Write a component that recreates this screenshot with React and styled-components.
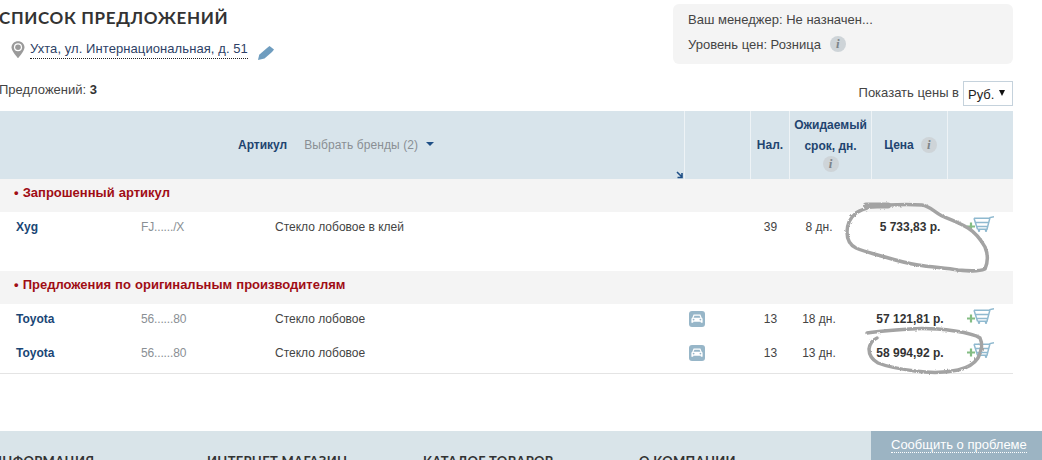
import React from 'react';
import styled, { createGlobalStyle } from 'styled-components';

const GlobalStyle = createGlobalStyle`
  html, body {
    margin: 0;
    padding: 0;
    background: #fff;
    overflow: hidden;
  }
  body {
    font-family: "Liberation Sans", Arial, sans-serif;
    font-size: 12px;
    color: #333;
  }
`;

const COLUMNS = '141px 134px 409px 66px 39px 82px 76px 66px';

const Page = styled.div`
  position: relative;
  width: 1042px;
  height: 460px;
  overflow: hidden;
`;

const Content = styled.div`
  width: 1013px;
`;

const Top = styled.div`
  display: flex;
  justify-content: space-between;
  padding-top: 4px;
  height: 81px;
  box-sizing: border-box;
`;

const Title = styled.h1`
  margin: 4px 0 0 -1px;
  font-family: Lato, sans-serif;
  font-size: 17px;
  line-height: 20px;
  font-weight: 700;
  letter-spacing: 0.65px;
  color: #333;
`;

const Address = styled.div`
  display: flex;
  align-items: flex-start;
  margin: 12px 0 0 11px;
  font-size: 13px;
`;

const AddressLink = styled.span`
  margin-left: 5px;
  padding-top: 1px;
  line-height: 16px;
  height: 17px;
  letter-spacing: 0.08px;
  color: #2e3f66;
  border-bottom: 1px dotted #222;
`;

const PencilIcon = styled.svg`
  width: 16px;
  height: 14px;
  margin: 6px 0 0 10px;
`;

const ManagerPanel = styled.div`
  width: 340px;
  height: 60px;
  box-sizing: border-box;
  padding: 7px 15px;
  background: #f4f4f4;
  border-radius: 6px;
  color: #444;
  font-size: 13px;
`;

const PanelLine = styled.div`
  display: flex;
  align-items: center;
  height: 16px;
  margin-bottom: 9px;
`;

const InfoBadge = styled.span`
  display: inline-flex;
  align-items: center;
  justify-content: center;
  width: 16px;
  height: 16px;
  margin-left: ${(p) => p.$gap ?? 9}px;
  margin-top: ${(p) => p.$raise ? -p.$raise : 0}px;
  border-radius: 50%;
  background: #ced4d8;
  color: #7d8489;
  font-family: "Liberation Serif", serif;
  font-style: italic;
  font-weight: 700;
  font-size: 13px;
  line-height: 16px;
`;

const OffersBar = styled.div`
  display: flex;
  justify-content: space-between;
  height: 30px;
  font-size: 13px;
`;

const OffersCount = styled.div`
  margin: 1px 0 0 -1px;
  line-height: 16px;
  color: #444;

  b {
    color: #333;
  }
`;

const CurrencyPicker = styled.div`
  display: flex;
  align-items: flex-start;
  color: #444;
`;

const CurrencyLabel = styled.span`
  margin: 4px 4px 0 0;
  line-height: 16px;
`;

const CurrencyBox = styled.div`
  position: relative;
  width: 50px;
  height: 25px;
  box-sizing: border-box;
  padding: 5px 0 0 4px;
  border: 1px solid #c5d2dc;
  line-height: 16px;
  color: #222;

  &::after {
    content: '';
    position: absolute;
    right: 7px;
    top: 8px;
    border-left: 3.5px solid transparent;
    border-right: 3.5px solid transparent;
    border-top: 6px solid #111;
  }
`;

const HeaderRow = styled.div`
  display: grid;
  grid-template-columns: 684px 66px 39px 82px 76px 66px;
  height: 68px;
  background: #d8e4eb;
  color: #1f4470;
  font-weight: 700;
`;

const HeaderCell = styled.div`
  position: relative;
  display: flex;
  flex-direction: ${(p) => (p.$row ? 'row' : 'column')};
  align-items: center;
  justify-content: center;
  text-align: center;
  box-sizing: border-box;
  padding-left: ${(p) => p.$shift || 0}px;
  padding-bottom: ${(p) => p.$lift || 0}px;
  border-left: ${(p) => (p.$first ? '0' : '1px solid #eef3f6')};
`;

const ArticleHead = styled.div`
  display: flex;
  align-items: center;
  align-self: flex-start;
  margin: 0 0 0 238px;
`;

const BrandPicker = styled.span`
  margin-left: 17px;
  font-weight: 400;
  letter-spacing: 0.1px;
  color: #8a8f94;
`;

const Caret = styled.span`
  display: inline-block;
  margin-left: 8px;
  margin-bottom: 2px;
  border-left: 4px solid transparent;
  border-right: 4px solid transparent;
  border-top: 4px solid #1f4f86;
`;

const ResizeMark = styled.svg`
  position: absolute;
  right: 0;
  bottom: 0;
  width: 8px;
  height: 8px;
`;

const TermLine = styled.div`
  line-height: 21px;
`;

const SectionRow = styled.div`
  height: ${(p) => p.$height}px;
  box-sizing: border-box;
  padding: 5px 0 0 14px;
  background: #f4f4f4;
  color: #a00d14;
  font-weight: 700;
  font-size: 13px;
  line-height: 18px;
  word-spacing: 0.5px;
`;

const OfferRow = styled.div`
  display: grid;
  grid-template-columns: ${COLUMNS};
  height: ${(p) => p.$height}px;
  box-sizing: border-box;
  padding-top: ${(p) => p.$top}px;
  line-height: 16px;
  color: #444;
  border-bottom: ${(p) => (p.$last ? '1px solid #e4e4e4' : '0')};
`;

const Brand = styled.div`
  padding-left: 16px;
  font-weight: 700;
  color: #1a4675;
`;

const Article = styled.div`
  letter-spacing: -0.15px;
  color: #8a8f94;
`;

const Centered = styled.div`
  display: flex;
  justify-content: center;
  padding-left: ${(p) => p.$left || 0}px;
  padding-right: ${(p) => p.$right || 0}px;
`;

const Price = styled(Centered)`
  font-weight: 700;
  color: #333;
  white-space: nowrap;
`;

const CarCell = styled.div`
  padding-left: 5px;
`;

const CarBadge = styled.svg`
  display: block;
  width: 16px;
  height: 16px;
`;

const CartIcon = styled.svg`
  width: 28px;
  height: 16px;
  margin-top: -3px;
`;

const Footer = styled.div`
  position: absolute;
  left: 0;
  right: 0;
  bottom: 0;
  height: 29px;
  background: #d9e4e9;
  display: flex;
  justify-content: space-between;
  overflow: hidden;
`;

const FooterMenu = styled.div`
  display: flex;
  padding-top: 22px;
`;

const FooterTitle = styled.div`
  width: ${(p) => p.$width}px;
  margin-left: ${(p) => p.$offset || 0}px;
  font-family: Lato, sans-serif;
  font-size: 13px;
  font-weight: 700;
  line-height: 16px;
  letter-spacing: 0.3px;
  color: #333;
  white-space: nowrap;
`;

const ReportButton = styled.div`
  width: 171px;
  box-sizing: border-box;
  padding-top: 6px;
  padding-left: 20px;
  background: #9cb4c3;
  color: #fff;
  font-size: 13px;
  line-height: 15px;

  span {
    display: inline-block;
    border-bottom: 1px dotted #fff;
  }
`;

const Scribbles = styled.svg`
  position: absolute;
  left: 0;
  top: 0;
  width: 1042px;
  height: 460px;
  pointer-events: none;
`;

const Info = (props) => <InfoBadge {...props}>i</InfoBadge>;

const Pin = () => (
  <svg width="14" height="19" viewBox="0 0 16 20">
    <path
      d="M8 .5C3.8.5.6 3.6.6 7.6.6 12 8 19.8 8 19.8S15.4 12 15.4 7.6C15.4 3.6 12.2.5 8 .5z"
      fill="#9a9a9a"
    />
    <circle cx="8" cy="7.5" r="4.6" fill="#fff" />
    <circle cx="8" cy="7.5" r="3.2" fill="#9a9a9a" />
  </svg>
);

const Car = () => (
  <CarBadge viewBox="0 0 16 16">
    <rect width="16" height="16" rx="3" fill="#97b6c8" />
    <path
      d="M4.6 3.6h6.8l1.3 3.2c.6.3.9.8.9 1.4v3.6h-1.8v-1H4.2v1H2.4V8.2c0-.6.3-1.1.9-1.4z"
      fill="#fff"
    />
    <path d="M5.4 4.8h5.2l.8 2H4.6z" fill="#97b6c8" />
    <circle cx="4.6" cy="8.6" r=".9" fill="#97b6c8" />
    <circle cx="11.4" cy="8.6" r=".9" fill="#97b6c8" />
  </CarBadge>
);

const Cart = () => (
  <CartIcon viewBox="0 0 28 16">
    <path d="M1 10.5h8M5 6.5v8" stroke="#84bd84" strokeWidth="2.2" fill="none" />
    <path
      d="M8 2.2h15.5M9.5 6.5h13M10.6 10.5h11M11.5 13.2h9.5L24 1.600l4-.8M8 2.200l3.500 11"
      stroke="#8fb9cf"
      strokeWidth="1.5"
      fill="none"
    />
    <circle cx="13" cy="14.8" r="1.2" fill="#8fb9cf" />
    <circle cx="20" cy="14.8" r="1.2" fill="#8fb9cf" />
  </CartIcon>
);

const Offer = ({ brand, article, name, car, stock, term, price, ...rest }) => (
  <OfferRow {...rest}>
    <Brand>{brand}</Brand>
    <Article>{article}</Article>
    <div>{name}</div>
    <CarCell>{car && <Car />}</CarCell>
    <Centered $left={2}>{stock}</Centered>
    <Centered $right={22}>{term}</Centered>
    <Price $left={2}>{price}</Price>
    <Centered>
      <Cart />
    </Centered>
  </OfferRow>
);

const App = () => (
  <Page>
    <GlobalStyle />
    <Content>
      <Top>
        <div>
          <Title>СПИСОК ПРЕДЛОЖЕНИЙ</Title>
          <Address>
            <Pin />
            <AddressLink>Ухта, ул. Интернациональная, д. 51</AddressLink>
            <PencilIcon viewBox="0 0 16 14">
              <path d="M0 14l1.2-5.2L9 2l2.5-2L16 3.6 14 6 6.5 12.5z" fill="#6f9dbf" />
            </PencilIcon>
          </Address>
        </div>
        <ManagerPanel>
          <PanelLine>Ваш менеджер: Не назначен...</PanelLine>
          <PanelLine>
            Уровень цен: Розница
            <Info />
          </PanelLine>
        </ManagerPanel>
      </Top>
      <OffersBar>
        <OffersCount>
          Предложений: <b>3</b>
        </OffersCount>
        <CurrencyPicker>
          <CurrencyLabel>Показать цены в</CurrencyLabel>
          <CurrencyBox>Руб.</CurrencyBox>
        </CurrencyPicker>
      </OffersBar>
      <HeaderRow>
        <HeaderCell $first>
          <ArticleHead>
            Артикул
            <BrandPicker>Выбрать бренды (2)</BrandPicker>
            <Caret />
          </ArticleHead>
          <ResizeMark viewBox="0 0 8 8">
            <path d="M1 1l5 5M6 2v4.5H1.5" stroke="#1f4f86" strokeWidth="1.6" fill="none" />
          </ResizeMark>
        </HeaderCell>
        <HeaderCell />
        <HeaderCell>Нал.</HeaderCell>
        <HeaderCell $lift={3}>
          <TermLine>Ожидаемый</TermLine>
          <TermLine>срок, дн.</TermLine>
          <Info $gap={0} $raise={1} />
        </HeaderCell>
        <HeaderCell $row $shift={2}>
          Цена
          <Info $gap={7} />
        </HeaderCell>
        <HeaderCell />
      </HeaderRow>
      <SectionRow $height={33}>• Запрошенный артикул</SectionRow>
      <Offer
        $height={59}
        $top={7}
        brand="Xyg"
        article="FJ....../X"
        name="Стекло лобовое в клей"
        stock="39"
        term="8 дн."
        price="5 733,83 р."
      />
      <SectionRow $height={33}>• Предложения по оригинальным производителям</SectionRow>
      <Offer
        $height={33}
        $top={7}
        brand="Toyota"
        article="56......80"
        name="Стекло лобовое"
        car
        stock="13"
        term="18 дн."
        price="57 121,81 р."
      />
      <Offer
        $height={37}
        $top={8}
        $last
        brand="Toyota"
        article="56......80"
        name="Стекло лобовое"
        car
        stock="13"
        term="13 дн."
        price="58 994,92 р."
      />
    </Content>
    <Footer>
      <FooterMenu>
        <FooterTitle $width={215} $offset={-8}>ИНФОРМАЦИЯ</FooterTitle>
        <FooterTitle $width={216}>ИНТЕРНЕТ МАГАЗИН</FooterTitle>
        <FooterTitle $width={216}>КАТАЛОГ ТОВАРОВ</FooterTitle>
        <FooterTitle $width={100}>О КОМПАНИИ</FooterTitle>
      </FooterMenu>
      <ReportButton>
        <span>Сообщить о проблеме</span>
      </ReportButton>
    </Footer>
    <Scribbles viewBox="0 0 1042 460">
      <defs>
        <filter id="rough" x="0" y="0" width="1042" height="460" filterUnits="userSpaceOnUse">
          <feTurbulence type="fractalNoise" baseFrequency="0.35" numOctaves="2" seed="4" />
          <feDisplacementMap in="SourceGraphic" scale="2.5" />
        </filter>
      </defs>
      <g
        fill="none"
        stroke="#a3a3a3"
        strokeWidth="3.5"
        strokeLinejoin="round"
        strokeLinecap="round"
        filter="url(#rough)"
      >
        <path d="M866 205.500H888" strokeWidth="6" />
        <path d="M870 207C885 205 905 204 922 205C930 206 934 212 942 216C952 220 960 223 968 228C976 233 981 240 985 247C988 254 988 262 985 269C978 272 968 271 958 270C945 268 930 267 918 265C905 263 895 260 885 257C875 254 865 252 856 248C850 245 847 240 847 232C847 224 850 218 856 213C860 210 865 209 870 207" />
        <path d="M867 333C880 331 895 330 910 329C925 328 940 329 955 331C968 333 976 335 980 338C983 344 981 352 978 358C974 364 967 368 958 370C945 373 930 373 915 371C900 369 888 367 878 363C871 359 869 354 869 349C870 343 872 340 877 338" />
      </g>
    </Scribbles>
  </Page>
);

export default App;
